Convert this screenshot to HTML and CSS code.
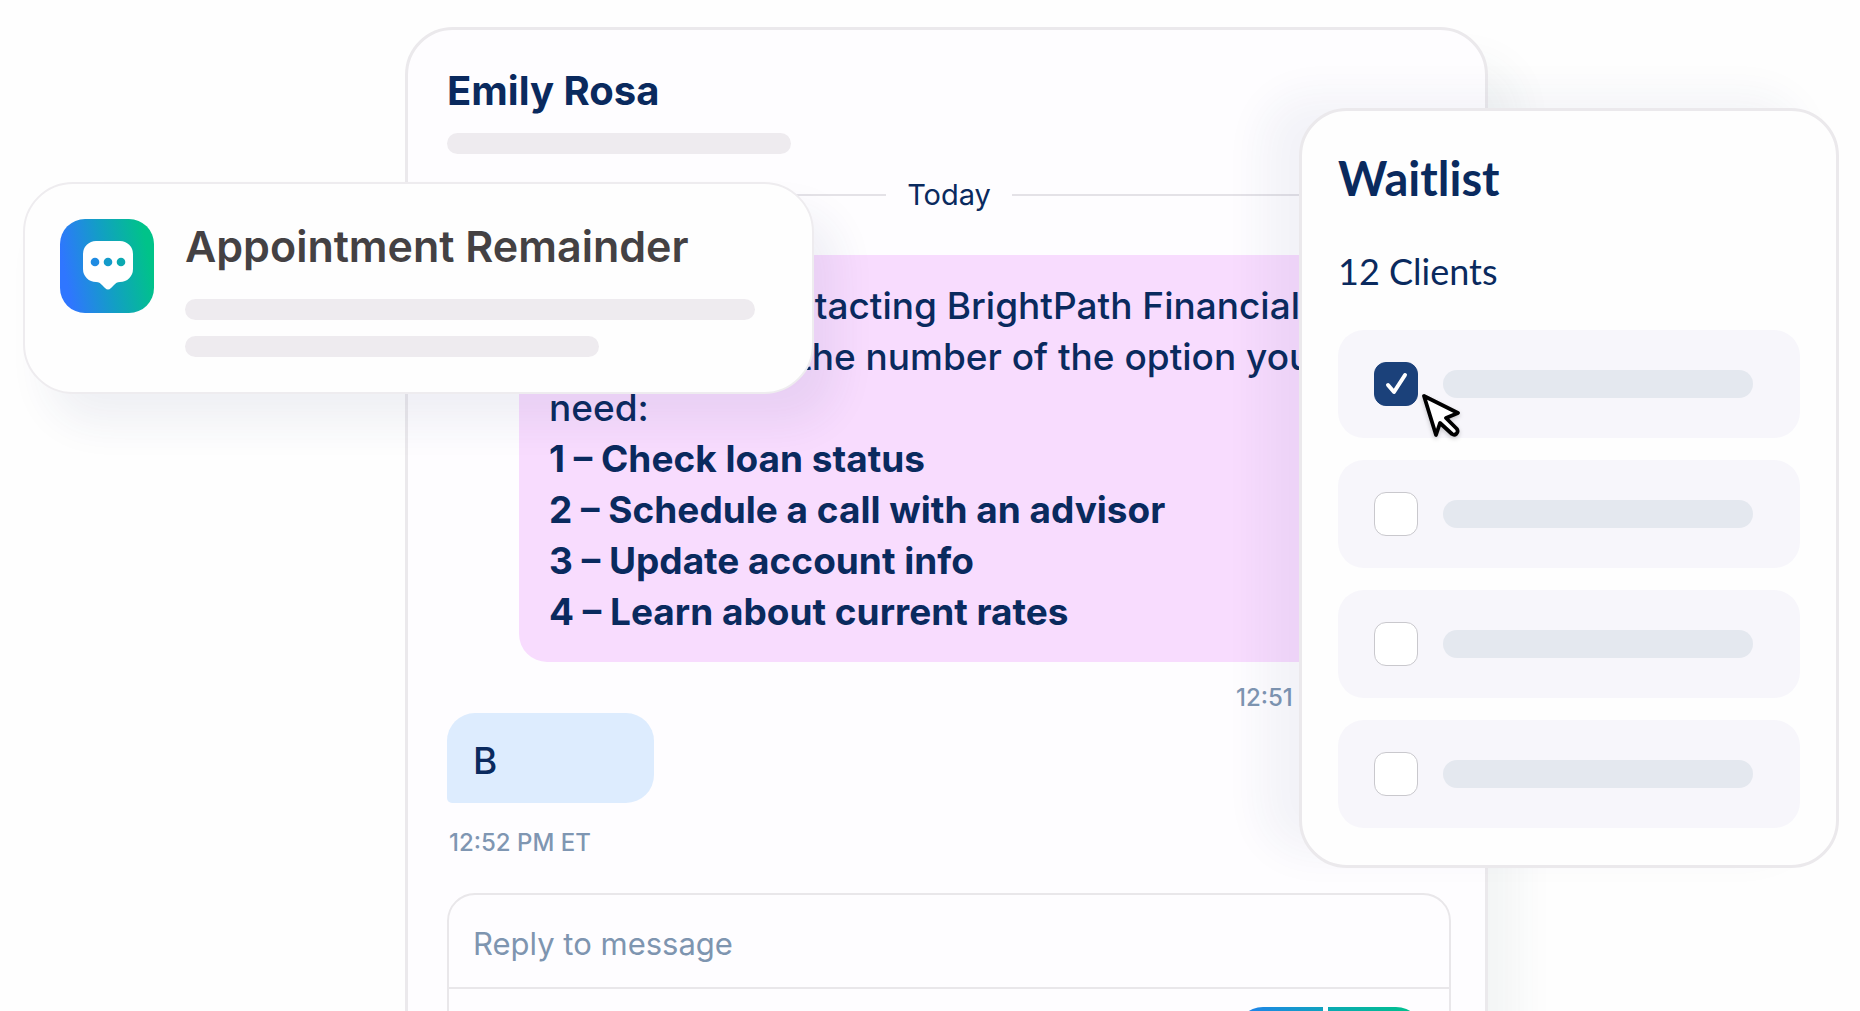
FILE: index.html
```html
<!DOCTYPE html>
<html lang="en">
<head>
	<meta charset="UTF-8">
	<meta name="viewport" content="width=device-width, initial-scale=1">
	<title>Messages</title>
	<link rel="stylesheet" href="styles.css">
</head>
<body>
	<main class="scene">
		<section class="chat">
			<header class="chat-header">
				<h1>Emily Rosa</h1>
				<div class="line line-header"></div>
			</header>
			<div class="day"><span>Today</span></div>
			<div class="msg msg-out">
				<div class="bubble">
					<p>Thanks for contacting BrightPath Financial.<br>Respond with the number of the option you<br>need:</p>
					<ul class="options">
						<li>1 – Check loan status</li>
						<li>2 – Schedule a call with an advisor</li>
						<li>3 – Update account info</li>
						<li>4 – Learn about current rates</li>
					</ul>
				</div>
				<time>12:51 PM ET</time>
			</div>
			<div class="msg msg-in">
				<div class="bubble">B</div>
				<time>12:52 PM ET</time>
			</div>
			<form class="reply">
				<input type="text" placeholder="Reply to message" aria-label="Reply to message">
				<div class="reply-bar">
					<div class="send">
						<button type="button" class="send-main" aria-label="Send"></button>
						<button type="button" class="send-more" aria-label="More options"></button>
					</div>
				</div>
			</form>
		</section>

		<aside class="notice">
			<svg class="notice-icon" viewBox="0 0 94 94" aria-hidden="true">
				<defs>
					<linearGradient id="grad" x1="0" y1="0.6" x2="1" y2="0.4">
						<stop offset="0.05" stop-color="#2f76ff"/>
						<stop offset="0.5" stop-color="#129fc4"/>
						<stop offset="0.95" stop-color="#00c389"/>
					</linearGradient>
				</defs>
				<rect width="94" height="94" rx="25" fill="url(#grad)"/>
				<path fill="#fff" d="M36 22h24a13 13 0 0 1 13 13v15a13 13 0 0 1-13 13c-3 0-4 1-6 3l-3 3c-2 2-4 2-6 0l-3-3c-2-2-3-3-6-3a13 13 0 0 1-13-13V35a13 13 0 0 1 13-13z"/>
				<circle cx="35" cy="43" r="4.3" fill="#1f8be2"/>
				<circle cx="48" cy="43" r="4.3" fill="#149bca"/>
				<circle cx="61" cy="43" r="4.3" fill="#0ba9b1"/>
			</svg>
			<div class="notice-body">
				<h2>Appointment Remainder</h2>
				<div class="line line-long"></div>
				<div class="line line-short"></div>
			</div>
		</aside>

		<aside class="waitlist">
			<h2>Waitlist</h2>
			<p class="count">12 Clients</p>
			<ul class="clients">
				<li><input type="checkbox" aria-label="Client 1" checked><span></span></li>
				<li><input type="checkbox" aria-label="Client 2"><span></span></li>
				<li><input type="checkbox" aria-label="Client 3"><span></span></li>
				<li><input type="checkbox" aria-label="Client 4"><span></span></li>
			</ul>
			<svg class="cursor" viewBox="0 0 40 46" aria-hidden="true">
				<path d="M3 3l34 17-12 5 11 11c2 4-2 7-5 5L19 30l-4 12z" fill="#fff" stroke="#000" stroke-width="3.8" stroke-linejoin="round"/>
			</svg>
		</aside>
	</main>
</body>
</html>
```
FILE: styles.css
```css
*{
	margin: 0;
	padding: 0;
	box-sizing: border-box;
}
body{
	background-color: #fefefe;
	color: #0a2a5e;
	font-family: Inter, "Liberation Sans", sans-serif;
}
ul{
	list-style: none;
}
.scene{
	position: relative;
	height: 100vh;
	overflow: hidden;
	padding: 27px 372px 0 405px;
}

/* conversation */
.chat{
	background-color: #fefdff;
	border: 3px solid #ebe9ec;
	border-radius: 48px;
	padding: 39px 34px 60px 39px;
	box-shadow: 30px 34px 40px rgba(40,70,80,0.05);
}
.chat-header h1{
	font-size: 40px;
	line-height: 44px;
	font-weight: 700;
}
.line{
	height: 21px;
	border-radius: 11px;
	background-color: #eeebef;
}
.line-header{
	width: 344px;
	margin-top: 20px;
}
.day{
	display: flex;
	align-items: center;
	gap: 21px;
	margin-top: 23px;
	font-size: 29px;
	line-height: 36px;
}
.day:before,
.day:after{
	content: "";
	flex: 1;
	height: 2px;
	background-color: #e4e2e7;
}
.msg time{
	display: block;
	font-size: 24px;
	line-height: 30px;
	font-weight: 500;
	color: #7f96b2;
}
.msg .bubble{
	font-size: 37px;
	line-height: 51px;
	font-weight: 500;
	border-radius: 28px;
}
.msg-out{
	margin: 42px 78px 0 72px;
	text-align: right;
}
.msg-out .bubble{
	background-color: #f8dcfe;
	text-align: left;
	padding: 25px 0 25px 30px;
}
.msg-out time{
	margin-top: 21px;
}
.options{
	font-weight: 700;
}
.msg-in .bubble{
	width: 207px;
	background-color: #ddecfe;
	border-bottom-left-radius: 5px;
	padding: 22px 26px 17px;
}
.msg-in time{
	margin: 25px 0 0 2px;
}
.reply{
	margin-top: 35px;
	border: 2px solid #e9e7ea;
	border-radius: 28px;
}
.reply input{
	display: block;
	width: 100%;
	height: 94px;
	border: 0;
	border-bottom: 2px solid #e9e7ea;
	border-radius: 28px 28px 0 0;
	padding: 4px 24px 0;
	background: none;
	font: 31px/36px Inter, "Liberation Sans", sans-serif;
	color: #0a2a5e;
}
.reply input::placeholder{
	color: #7e95b0;
	opacity: 1;
}
.reply-bar{
	display: flex;
	justify-content: flex-end;
	padding: 18px 26px;
}
.send{
	display: flex;
	gap: 5px;
}
.send button{
	height: 54px;
	border: 0;
}
.send-main{
	width: 87px;
	border-radius: 27px 0 0 27px;
	background: linear-gradient(90deg, #2180ef, #10a2bf);
}
.send-more{
	width: 95px;
	border-radius: 0 27px 27px 0;
	background: linear-gradient(90deg, #0ba9b3, #00c389);
}

/* reminder card */
.notice{
	position: absolute;
	top: 182px;
	left: 23px;
	width: 791px;
	display: flex;
	gap: 31px;
	padding: 35px 57px 35px 35px;
	background-color: #fefefe;
	border: 2px solid #eeecef;
	border-radius: 50px;
	box-shadow: 24px 30px 40px rgba(40,50,110,0.07);
}
.notice-icon{
	flex: none;
	width: 94px;
	height: 94px;
}
.notice-body{
	flex: 1;
}
.notice h2{
	font-size: 43px;
	line-height: 54px;
	font-weight: 600;
	color: #444143;
}
.line-long{
	margin-top: 26px;
}
.line-short{
	width: 414px;
	margin-top: 16px;
}

/* waitlist card */
.waitlist{
	position: absolute;
	top: 108px;
	right: 21px;
	width: 540px;
	padding: 39px 36px 37px;
	background-color: #fefefe;
	border: 3px solid #ebe9ec;
	border-radius: 48px;
	box-shadow: -38px -14px 40px rgba(40,50,110,0.05);
	font-family: Lato, "Liberation Sans", sans-serif;
}
.waitlist h2{
	font-size: 47px;
	line-height: 56px;
	font-weight: 700;
}
.count{
	margin-top: 43px;
	font-size: 36px;
	line-height: 44px;
}
.clients{
	display: grid;
	gap: 22px;
	margin-top: 37px;
}
.clients li{
	display: flex;
	align-items: center;
	gap: 25px;
	height: 108px;
	padding: 0 47px 0 36px;
	border-radius: 26px;
	background-color: #f7f6fb;
}
.clients input{
	appearance: none;
	flex: none;
	width: 44px;
	height: 44px;
	border: 1px solid #c9c8cd;
	border-radius: 12px;
	background-color: #fff;
}
.clients input:checked{
	border-color: #1b417a;
	background: #1b417a url("data:image/svg+xml,%3Csvg xmlns='http://www.w3.org/2000/svg' viewBox='0 0 44 44'%3E%3Cpath d='M14 23l6 7 11-17' fill='none' stroke='%23fff' stroke-width='4' stroke-linecap='round' stroke-linejoin='round'/%3E%3C/svg%3E") center / 44px no-repeat;
}
.clients span{
	flex: 1;
	height: 28px;
	border-radius: 14px;
	background-color: #e4e8ef;
}
.cursor{
	position: absolute;
	top: 282px;
	left: 119px;
	width: 40px;
	height: 46px;
	filter: drop-shadow(0 2px 2px rgba(0,0,0,0.2));
}
```
